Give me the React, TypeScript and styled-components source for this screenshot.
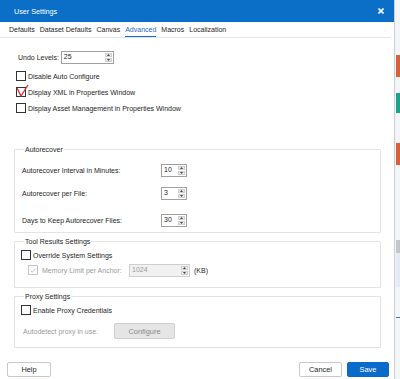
import React from 'react';
import styled, {createGlobalStyle} from 'styled-components';

const Global = createGlobalStyle`
  html, body {
    margin: 0;
    padding: 0;
    background: #fff;
  }
  body {
    font-family: "Liberation Sans", Arial, sans-serif;
    font-size: 7px;
    color: #1e1e1e;
  }
`;

const Page = styled.div`
  width: 400px;
  height: 379px;
  display: flex;
  overflow: hidden;
`;

const Dialog = styled.div`
  width: 395px;
  display: flex;
  flex-direction: column;
  background: #fff;
  border-right: 1px solid #c9cdd4;
  box-sizing: border-box;
`;

const TitleBar = styled.div`
  height: 22px;
  flex-shrink: 0;
  background: #0c6fc7;
  color: #fff;
  display: flex;
  align-items: center;
  justify-content: space-between;
  padding: 0 9px 0 14px;
  font-size: 7.2px;
`;

const CloseBtn = styled.div`
  width: 8px;
  height: 8px;
  display: flex;
  align-items: center;
  justify-content: center;
`;

const TabBar = styled.div`
  height: 14px;
  margin: 1px 3px 0 0;
  padding-left: 9px;
  display: flex;
  gap: 5px;
  border-bottom: 1px solid #dfe6f0;
`;

const Tab = styled.div<{ $active?: boolean }>`
  line-height: 13px;
  color: ${p => (p.$active ? '#1d6bc6' : '#1e1e1e')};
  border-bottom: 1px solid ${p => (p.$active ? '#1d6bc6' : 'transparent')};
`;

const Content = styled.div`
  flex: 1;
  display: flex;
  flex-direction: column;
  padding: 0 13px 0 14px;
`;

const UndoRow = styled.div`
  margin-top: 12px;
  height: 14px;
  display: flex;
  align-items: center;
  padding-left: 4px;
  gap: 2px;
`;

const CheckRow = styled.div<{ $indent?: number }>`
  position: relative;
  height: 16px;
  display: flex;
  align-items: center;
  gap: 2px;
  padding-left: ${p => p.$indent ?? 2}px;
`;

const Box = styled.div<{ $disabled?: boolean }>`
  width: 8px;
  height: 8px;
  border: 1px solid ${p => (p.$disabled ? '#c4c4c4' : '#333')};
  background: #fff;
  display: flex;
  align-items: center;
  justify-content: center;
  flex-shrink: 0;
`;

const Label = styled.span<{ $muted?: boolean }>`
  line-height: 9px;
  white-space: nowrap;
  color: ${p => (p.$muted ? '#9a9a9a' : '#1e1e1e')};
`;

const RedMark = styled.svg`
  position: absolute;
  left: 2px;
  top: 0;
`;

const Group = styled.fieldset<{ $top: number; $pt: number; $pb: number }>`
  margin: ${p => p.$top}px 0 0 0;
  padding: ${p => p.$pt}px 6px ${p => p.$pb}px 6px;
  border: 1px solid #e3e3e3;
  border-radius: 1px;
  min-width: 0;
`;

const Legend = styled.legend`
  padding: 0 1px;
  margin-left: 3px;
  line-height: 9px;
`;

const FieldRow = styled.div<{ $gap?: number }>`
  height: 14px;
  margin-top: ${p => p.$gap ?? 0}px;
  display: grid;
  grid-template-columns: 139px auto;
  align-items: center;
  padding-left: 1px;
`;

const Spin = styled.div<{ $w: number; $disabled?: boolean }>`
  width: ${p => p.$w}px;
  height: 13px;
  box-sizing: border-box;
  border: 1px solid ${p => (p.$disabled ? '#cfcfcf' : '#a0a0a0')};
  background: ${p => (p.$disabled ? '#f1f1f1' : '#fff')};
  color: ${p => (p.$disabled ? '#9a9a9a' : '#1e1e1e')};
  display: flex;
  justify-content: space-between;
  padding: 1px 1px 1px 2px;
  line-height: 8px;
`;

const Arrows = styled.div`
  width: 7px;
  display: flex;
  flex-direction: column;
  gap: 1px;
`;

const Arrow = styled.div`
  flex: 1;
  background: #e9e9e9;
  border: 1px solid #cfcfcf;
  display: flex;
  align-items: center;
  justify-content: center;
`;

const MemoryRow = styled.div`
  margin-top: 2px;
  height: 14px;
  display: flex;
  align-items: center;
  padding-left: 7px;
`;

const MemoryLabel = styled(Label)`
  margin-left: 4px;
  width: 87px;
`;

const Unit = styled(Label)`
  margin-left: 4px;
`;

const ProxyRow = styled.div`
  margin-top: 7px;
  height: 16px;
  display: flex;
  align-items: center;
  padding-left: 2px;
`;

const ProxyNote = styled(Label)`
  width: 76px;
`;

const ConfigureBtn = styled.div`
  margin-left: 15px;
  width: 61px;
  height: 16px;
  box-sizing: border-box;
  border: 1px solid #cfcfcf;
  border-radius: 2px;
  background: #e5e5e5;
  color: #8a8a8a;
  display: flex;
  align-items: center;
  justify-content: center;
  font-size: 7.4px;
`;

const Footer = styled.div`
  margin-top: 13px;
  padding: 0 5px 2px 7px;
  display: flex;
  gap: 5px;
`;

const Button = styled.div<{ $primary?: boolean; $w: number }>`
  width: ${p => p.$w}px;
  height: 15px;
  box-sizing: border-box;
  border-radius: 2px;
  border: 1px solid ${p => (p.$primary ? '#0b68c4' : '#c9c9c9')};
  background: ${p => (p.$primary ? '#0b6bcb' : '#fff')};
  color: ${p => (p.$primary ? '#fff' : '#1e1e1e')};
  display: flex;
  align-items: center;
  justify-content: center;
  font-size: 7.4px;
`;

const Spacer = styled.div`
  flex: 1;
`;

const Backdrop = styled.div`
  flex: 1;
  background: #f4f5f7;
  display: flex;
  flex-direction: column;
`;

const Block = styled.div<{ $top: number; $h: number; $color: string }>`
  margin-top: ${p => p.$top}px;
  height: ${p => p.$h}px;
  background: ${p => p.$color};
  margin-left: 1px;
`;

const SpinBox = ({value, width, disabled}: { value: string; width: number; disabled?: boolean }) => (
    <Spin $w={width} $disabled={disabled}>
        <span>{value}</span>
        <Arrows>
            <Arrow>
                <svg width="3" height="2" viewBox="0 0 3 2"><path d="M0 2 L1.5 0 L3 2 Z" fill="#444"/></svg>
            </Arrow>
            <Arrow>
                <svg width="3" height="2" viewBox="0 0 3 2"><path d="M0 0 L1.5 2 L3 0 Z" fill="#444"/></svg>
            </Arrow>
        </Arrows>
    </Spin>
);

const tabs = ['Defaults', 'Dataset Defaults', 'Canvas', 'Advanced', 'Macros', 'Localization'];

const App = () => {
    return (
        <Page>
            <Global/>
            <Dialog>
                <TitleBar>
                    <span>User Settings</span>
                    <CloseBtn>
                        <svg width="6" height="6" viewBox="0 0 6 6">
                            <path d="M0.5 0.5 L5.5 5.5 M5.5 0.5 L0.5 5.5" stroke="#fff" strokeWidth="1.6"/>
                        </svg>
                    </CloseBtn>
                </TitleBar>
                <TabBar>
                    {tabs.map(t => (
                        <Tab key={t} $active={t === 'Advanced'}>{t}</Tab>
                    ))}
                </TabBar>
                <Content>
                    <UndoRow>
                        <Label>Undo Levels:</Label>
                        <SpinBox value="25" width={53}/>
                    </UndoRow>
                    <CheckRow style={{marginTop: 4}}>
                        <Box/>
                        <Label>Disable Auto Configure</Label>
                    </CheckRow>
                    <CheckRow>
                        <Box/>
                        <Label>Display XML in Properties Window</Label>
                        <RedMark width="14" height="14" viewBox="0 0 14 14">
                            <path d="M1 4 L5 12 L12 1" stroke="#e0262a" strokeWidth="1.3" fill="none"/>
                        </RedMark>
                    </CheckRow>
                    <CheckRow>
                        <Box/>
                        <Label>Display Asset Management in Properties Window</Label>
                    </CheckRow>

                    <Group $top={29} $pt={9} $pb={5}>
                        <Legend>Autorecover</Legend>
                        <FieldRow>
                            <Label>Autorecover Interval in Minutes:</Label>
                            <SpinBox value="10" width={26}/>
                        </FieldRow>
                        <FieldRow $gap={9}>
                            <Label>Autorecover per File:</Label>
                            <SpinBox value="3" width={26}/>
                        </FieldRow>
                        <FieldRow $gap={13}>
                            <Label>Days to Keep Autorecover Files:</Label>
                            <SpinBox value="30" width={26}/>
                        </FieldRow>
                    </Group>

                    <Group $top={4} $pt={3} $pb={10}>
                        <Legend>Tool Results Settings</Legend>
                        <CheckRow $indent={0} style={{height: 12}}>
                            <Box/>
                            <Label>Override System Settings</Label>
                        </CheckRow>
                        <MemoryRow>
                            <Box $disabled>
                                <svg width="6" height="5" viewBox="0 0 6 5">
                                    <path d="M0.5 2.5 L2.3 4.2 L5.5 0.6" stroke="#b8b8b8" strokeWidth="0.9" fill="none"/>
                                </svg>
                            </Box>
                            <MemoryLabel $muted>Memory Limit per Anchor:</MemoryLabel>
                            <SpinBox value="1024" width={61} disabled/>
                            <Unit>(KB)</Unit>
                        </MemoryRow>
                    </Group>

                    <Group $top={4} $pt={3} $pb={8}>
                        <Legend>Proxy Settings</Legend>
                        <CheckRow $indent={0} style={{height: 12}}>
                            <Box/>
                            <Label>Enable Proxy Credentials</Label>
                        </CheckRow>
                        <ProxyRow>
                            <ProxyNote $muted>Autodetect proxy in use.</ProxyNote>
                            <ConfigureBtn>Configure</ConfigureBtn>
                        </ProxyRow>
                    </Group>
                </Content>
                <Footer>
                    <Button $w={44}>Help</Button>
                    <Spacer/>
                    <Button $w={43}>Cancel</Button>
                    <Button $w={42} $primary>Save</Button>
                </Footer>
            </Dialog>
            <Backdrop>
                <Block $top={55} $h={22} $color="#d8603c"/>
                <Block $top={16} $h={20} $color="#1ba38b"/>
                <Block $top={30} $h={22} $color="#d8603c"/>
                <Block $top={75} $h={13} $color="#c4c6ca"/>
                <Block $top={0} $h={34} $color="#e4ebf6"/>
                <Block $top={30} $h={1} $color="#3b6fd0"/>
            </Backdrop>
        </Page>
    );
};

export default App;
